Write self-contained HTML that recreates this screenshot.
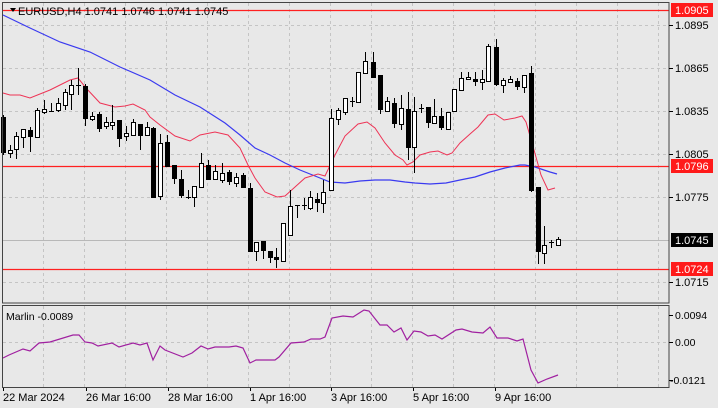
<!DOCTYPE html>
<html><head><meta charset="utf-8"><style>
html,body{margin:0;padding:0;background:#e8e8e8;}
body{width:718px;height:408px;overflow:hidden;position:relative;font-family:"Liberation Sans",sans-serif;}
svg{position:absolute;left:0;top:0;}
</style></head><body>
<svg id="s" width="718" height="408" xmlns="http://www.w3.org/2000/svg" font-family="Liberation Sans, sans-serif" font-size="11">
<rect width="718" height="408" fill="#e8e8e8"/>
<g id="grid" stroke="#c4c4c4" stroke-dasharray="3,3" stroke-width="1"></g>
<g id="lines"></g>
<g id="candles"></g>
<rect x="2.5" y="2.5" width="666.5" height="300.5" fill="none" stroke="#444" stroke-width="1"/>
<rect x="2.5" y="305.5" width="666.5" height="82" fill="none" stroke="#444" stroke-width="1"/>
<path d="M10 8 L16 8 L13 12 Z" fill="#000"/>
<text x="18" y="15" fill="#000">EURUSD,H4  1.0741 1.0746 1.0741 1.0745</text>
<text x="6" y="320" fill="#000" font-size="10.5">Marlin -0.0089</text>
<g id="axis" fill="#000"></g>
</svg>
<script>
var NS="http://www.w3.org/2000/svg";
function el(p,t,a,txt){var e=document.createElementNS(NS,t);for(var k in a)e.setAttribute(k,a[k]);if(txt!=null)e.textContent=txt;document.getElementById(p).appendChild(e);return e;}
[43,84,125,166,207,248,289,330,371,412,453,494,535,576,617,658].forEach(function(x){
 el('grid','line',{x1:x+.5,y1:3,x2:x+.5,y2:302});el('grid','line',{x1:x+.5,y1:306,x2:x+.5,y2:387});});
[25,68,111,154,197,282].forEach(function(y){el('grid','line',{x1:3,y1:y+.5,x2:668,y2:y+.5});});
el('grid','line',{x1:3,y1:342.5,x2:668,y2:342.5});
el('lines','line',{x1:3,y1:240.5,x2:669,y2:240.5,stroke:'#b8b8b8'});
[10,166,269].forEach(function(y){el('lines','line',{x1:3,y1:y+.5,x2:669,y2:y+.5,stroke:'#ff2020','stroke-width':1.2});});
var red=[[3,93],[10,95],[20,95],[30,98],[50,90],[70,80],[78,78],[86,88],[100,103],[115,107],[125,106],[133,104],[145,110],[150,117],[160,125],[175,136],[190,141],[200,135],[215,132],[228,135],[240,148],[248,165],[255,178],[265,192],[277,197],[285,196],[295,187],[305,178],[318,174],[325,176],[335,155],[345,136],[358,124],[367,122],[375,128],[385,143],[395,155],[403,160],[407,165],[413,162],[420,155],[430,152],[438,151],[447,155],[452,153],[460,143],[470,134],[478,127],[488,115],[495,114],[504,120],[515,118],[522,116],[526,122],[534,150],[541,175],[548,190],[555,188]];
var blue=[[3,15],[30,28],[60,42],[90,52],[120,67],[150,80],[175,95],[200,107],[225,123],[240,135],[255,148],[270,155],[285,163],[300,170],[320,178],[330,182],[345,183],[360,181],[375,180],[390,180],[405,182],[415,183],[430,184],[446,183],[460,180],[475,177],[490,172],[505,168],[520,165],[525,165],[535,167],[550,172],[557,174]];
var mag=[[3,358],[9,355],[23,349],[30,351],[39,343],[50,342],[73,335],[79,335],[85,342],[92,343],[98,346],[112,343],[119,347],[133,343],[140,345],[147,343],[153,360],[160,346],[165,350],[183,357],[192,353],[201,346],[208,349],[215,347],[229,347],[236,346],[243,348],[250,363],[256,360],[275,360],[279,357],[291,343],[304,342],[311,339],[320,339],[325,337],[332,318],[343,316],[353,317],[364,310],[369,311],[380,325],[387,325],[394,332],[401,328],[407,340],[414,331],[421,332],[428,336],[435,335],[442,339],[456,330],[462,329],[472,332],[483,333],[490,327],[497,338],[508,338],[517,341],[523,339],[531,370],[538,383],[547,379],[558,375]];
function pl(pts,c,w){el('lines','polyline',{points:pts.map(function(p){return p.join(',')}).join(' '),fill:'none',stroke:c,'stroke-width':w});}
pl(blue,'#3a3af0',1.2);pl(red,'#ee3355',1);pl(mag,'#a020a0',1.2);
var C=[[3,117,152,115,155,0],[10,150,153,145,158,1],[16,136,149,132,159,1],[23,129,137,129,148,1],[30,130,136,127,152,0],[37,110,137,108,137,1],[44,109,112,100,114,1],[51,111,111,103,112,1],[58,103,110,98,112,1],[65,92,105,89,110,1],[71,85,94,80,110,1],[78,85,85,68,95,1],[85,86,118,84,126,0],[92,116,119,112,121,1],[99,114,128,112,132,0],[106,122,126,117,129,1],[112,122,125,105,130,1],[119,120,138,120,147,0],[126,133,136,126,141,1],[133,122,135,119,135,1],[140,124,135,124,150,0],[147,127,135,122,135,1],[153,128,197,127,197,0],[160,143,196,134,200,1],[167,142,166,135,166,0],[174,165,178,165,184,0],[181,179,195,170,198,0],[188,197,197,190,199,1],[194,186,197,186,207,1],[201,163,187,153,187,1],[208,165,179,160,180,0],[215,171,179,165,180,1],[222,173,180,163,183,1],[229,172,181,170,185,0],[236,177,183,173,187,1],[243,175,187,173,188,0],[250,188,251,183,252,0],[256,242,251,242,261,1],[263,241,250,241,259,0],[270,251,257,251,263,0],[276,257,259,248,268,0],[283,223,261,223,262,1],[290,206,235,190,235,1],[297,205,205,205,218,1],[304,205,205,198,210,1],[310,197,208,191,210,1],[317,199,202,193,212,0],[323,192,203,180,213,1],[331,118,190,109,190,1],[338,110,119,108,125,1],[345,98,112,98,115,1],[352,101,101,97,107,1],[358,72,102,72,102,1],[365,61,73,52,73,1],[373,62,77,52,77,0],[380,75,109,75,114,0],[387,101,111,97,111,1],[394,103,123,98,128,0],[401,108,124,95,130,1],[408,109,147,92,160,0],[414,111,147,97,173,1],[421,108,108,104,113,1],[428,107,122,107,128,0],[434,116,123,99,123,1],[441,116,127,108,130,0],[448,112,129,112,129,1],[454,89,111,89,111,1],[461,78,90,72,90,1],[468,77,79,72,80,1],[475,79,81,72,86,0],[482,79,82,70,90,1],[488,46,81,44,81,1],[496,47,84,39,86,0],[503,80,85,78,93,1],[510,79,82,76,83,1],[517,81,86,78,90,0],[524,75,87,75,93,1],[531,73,190,66,192,0],[538,187,251,187,264,0],[544,245,253,226,264,1],[551,242,242,240,248,1],[558,239,245,237,245,1]];
C.forEach(function(c){var x=c[0];
 el('candles','line',{x1:x+.5,y1:c[3],x2:x+.5,y2:c[4],stroke:'#000'});
 var h=Math.max(c[2]-c[1],0);
 if(h<1){el('candles','line',{x1:x-2,y1:c[1]+.5,x2:x+3,y2:c[1]+.5,stroke:'#000'});}
 else el('candles','rect',{x:x-1.5,y:c[1]+.5,width:4,height:h,fill:c[5]?'#fff':'#000',stroke:'#000'});
});
[[25,'1.0895'],[68,'1.0865'],[111,'1.0835'],[154,'1.0805'],[197,'1.0775'],[282,'1.0715'],[315,'0.0094'],[342,'0.00'],[380,'-0.0121']].forEach(function(a){
 el('axis','line',{x1:669,y1:a[0]+.5,x2:673,y2:a[0]+.5,stroke:'#000'});
 el('axis','text',{x:a[1][0]=='-'?670:675,y:a[0]+4,'font-size':a[0]>300?10.5:11},a[1]);});
[[10,'1.0905','#ff1a1a'],[166,'1.0796','#ff1a1a'],[240,'1.0745','#000'],[269,'1.0724','#ff1a1a']].forEach(function(a){
 el('axis','rect',{x:671,y:a[0]-7,width:42,height:14,fill:a[2]});
 el('axis','text',{x:675,y:a[0]+4,fill:'#fff'},a[1]);});
[[3,'22 Mar 2024'],[86,'26 Mar 16:00'],[168,'28 Mar 16:00'],[250,'1 Apr 16:00'],[331,'3 Apr 16:00'],[413,'5 Apr 16:00'],[495,'9 Apr 16:00']].forEach(function(a){
 el('axis','line',{x1:a[0]+.5,y1:388,x2:a[0]+.5,y2:391,stroke:'#000'});
 el('axis','text',{x:a[0],y:401},a[1]);});
</script>
</body></html>
